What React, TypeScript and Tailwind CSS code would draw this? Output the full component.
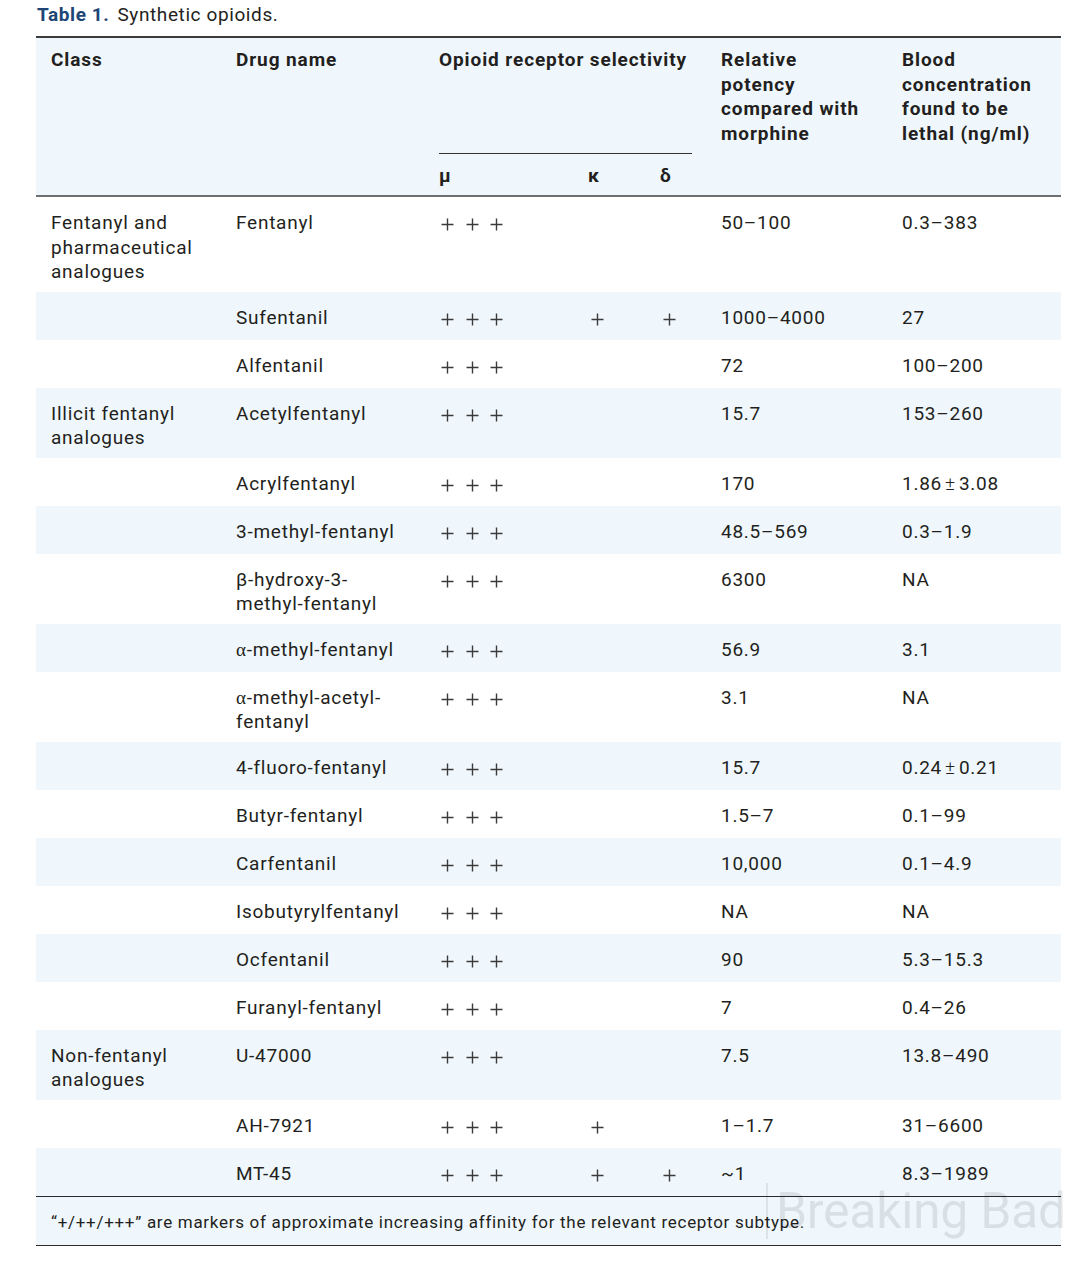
import React from "react";

type Row = {
  cls?: React.ReactNode;
  drug: React.ReactNode;
  k?: boolean;
  d?: boolean;
  rel: string;
  blood: React.ReactNode;
  bg?: boolean;
};

const A = () => <span style={{ fontFamily: '"Liberation Serif", serif' }}>α</span>;

const pm = (a: string, b: string) => (
  <span>
    {a}
    <span className="mx-[3px] font-light">±</span>
    {b}
  </span>
);

const rows: Row[] = [
  { cls: <>Fentanyl and<br />pharmaceutical<br />analogues</>, drug: "Fentanyl", rel: "50–100", blood: "0.3–383" },
  { drug: "Sufentanil", k: true, d: true, rel: "1000–4000", blood: "27", bg: true },
  { drug: "Alfentanil", rel: "72", blood: "100–200" },
  { cls: <>Illicit fentanyl<br />analogues</>, drug: "Acetylfentanyl", rel: "15.7", blood: "153–260", bg: true },
  { drug: "Acrylfentanyl", rel: "170", blood: pm("1.86", "3.08") },
  { drug: "3-methyl-fentanyl", rel: "48.5–569", blood: "0.3–1.9", bg: true },
  { drug: <>β-hydroxy-3-<br />methyl-fentanyl</>, rel: "6300", blood: "NA" },
  { drug: <><A />-methyl-fentanyl</>, rel: "56.9", blood: "3.1", bg: true },
  { drug: <><A />-methyl-acetyl-<br />fentanyl</>, rel: "3.1", blood: "NA" },
  { drug: "4-fluoro-fentanyl", rel: "15.7", blood: pm("0.24", "0.21"), bg: true },
  { drug: "Butyr-fentanyl", rel: "1.5–7", blood: "0.1–99" },
  { drug: "Carfentanil", rel: "10,000", blood: "0.1–4.9", bg: true },
  { drug: "Isobutyrylfentanyl", rel: "NA", blood: "NA" },
  { drug: "Ocfentanil", rel: "90", blood: "5.3–15.3", bg: true },
  { drug: "Furanyl-fentanyl", rel: "7", blood: "0.4–26" },
  { cls: <>Non-fentanyl<br />analogues</>, drug: "U-47000", rel: "7.5", blood: "13.8–490", bg: true },
  { drug: "AH-7921", k: true, rel: "1–1.7", blood: "31–6600" },
  { drug: "MT-45", k: true, d: true, rel: "~1", blood: "8.3–1989", bg: true },
];

const Plus = () => (
  <svg width="13" height="13" viewBox="0 0 13 13" className="block">
    <path d="M6.5 0.5V12.5M0.5 6.5H12.5" stroke="#3a3a3a" strokeWidth="1.4" fill="none" />
  </svg>
);

export default function App() {
  const td = "align-top pt-[14px] pb-[7px] pl-[14px]";
  const tdp = "align-top pt-[21px] pb-[7px]";
  return (
    <div
      className="relative w-[1090px] h-[1267px] bg-white text-[#231f20] overflow-hidden"
      style={{ fontFamily: 'Roboto, "Liberation Sans", sans-serif' }}
    >
      <div className="pl-[37px] pt-[3px] h-[36px] text-[19px] leading-[24px] tracking-[0.6px]">
        <span className="font-bold text-[#1d4576]">Table 1.</span>
        <span className="ml-[8px]">Synthetic opioids.</span>
      </div>
      <table className="ml-[36px] w-[1025px] table-fixed border-collapse text-[19px] leading-[24.5px] tracking-[0.75px]">
        <colgroup>
          <col className="w-[186px]" />
          <col className="w-[203px]" />
          <col className="w-[150px]" />
          <col className="w-[73px]" />
          <col className="w-[59px]" />
          <col className="w-[181px]" />
          <col className="w-[173px]" />
        </colgroup>
        <thead className="bg-[#eff7fc] font-bold tracking-[0.9px]">
          <tr className="border-t-2 border-[#3b3b3b]">
            <th rowSpan={2} className="align-top pt-[10px] pl-[15px] text-left font-bold">Class</th>
            <th rowSpan={2} className="align-top pt-[10px] pl-[14px] text-left font-bold">Drug name</th>
            <th colSpan={3} className="align-top p-0 text-left font-bold">
              <div className="flex h-[116px] flex-col justify-between">
                <div className="pt-[10px] pl-[14px] whitespace-nowrap">Opioid receptor selectivity</div>
                <div className="ml-[14px] mr-[15px] border-b-[1.5px] border-[#333]" />
              </div>
            </th>
            <th rowSpan={2} className="align-top pt-[10px] pl-[14px] text-left font-bold">
              Relative<br />potency<br />compared with<br />morphine
            </th>
            <th rowSpan={2} className="align-top pt-[10px] pl-[14px] text-left font-bold">
              Blood<br />concentration<br />found to be<br />lethal (ng/ml)
            </th>
          </tr>
          <tr className="border-b-2 border-[#6f6f6f]">
            <th className="h-[42px] pl-[14px] pt-[4px] text-left font-bold">μ</th>
            <th className="pl-[13px] pt-[4px] text-left font-bold">κ</th>
            <th className="pl-[12px] pt-[4px] text-left font-bold">δ</th>
          </tr>
        </thead>
        <tbody>
          {rows.map((r, i) => (
            <tr key={i} className={r.bg ? "bg-[#eff7fc]" : "bg-white"}>
              <td className="align-top pt-[14px] pb-[7px] pl-[15px]">{r.cls}</td>
              <td className={td}>{r.drug}</td>
              <td className={tdp + " pl-[16px]"}>
                <div className="flex h-[20px] gap-[11.5px]">
                  <Plus />
                  <Plus />
                  <Plus />
                </div>
              </td>
              <td className={tdp + " pl-[16px]"}>{r.k ? <Plus /> : null}</td>
              <td className={tdp + " pl-[15px]"}>{r.d ? <Plus /> : null}</td>
              <td className={td}>{r.rel}</td>
              <td className={td}>{r.blood}</td>
            </tr>
          ))}
        </tbody>
        <tfoot>
          <tr className="border-t-[1.5px] border-b-[1.5px] border-[#2a2a2a] bg-[#eff7fc]">
            <td colSpan={7} className="h-[49px] pl-[15px] pt-[2px] text-[17px] leading-[20px] tracking-[0.7px] align-middle">
              “+/++/+++” are markers of approximate increasing affinity for the relevant receptor subtype.
            </td>
          </tr>
        </tfoot>
      </table>
      <div className="pointer-events-none absolute left-[766px] top-[1183px] flex items-center">
        <div className="h-[56px] w-[2px] bg-[rgba(0,0,0,0.08)]" />
        <span className="ml-[8px] text-[50px] leading-[56px] text-[rgba(0,0,0,0.09)] tracking-[-0.3px]">Breaking Bad</span>
      </div>
    </div>
  );
}
